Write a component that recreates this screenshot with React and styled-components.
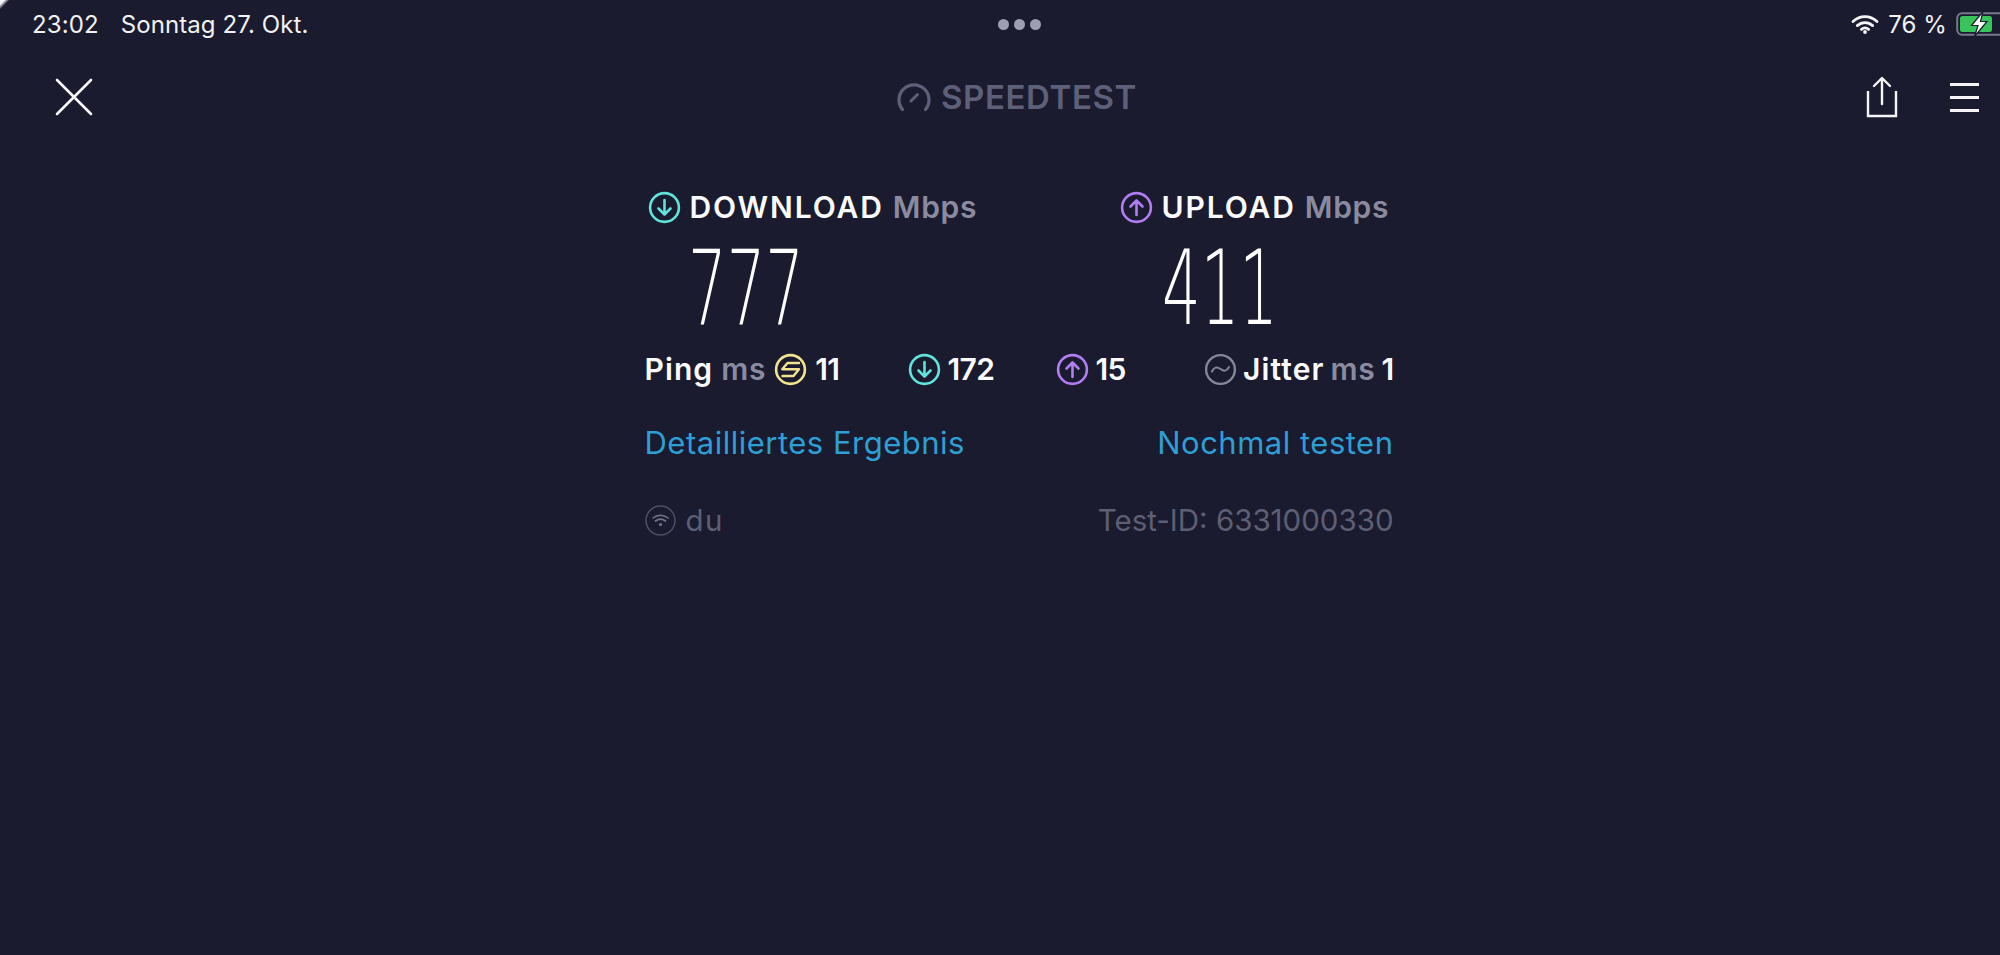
import React from 'react';
import styled, { createGlobalStyle } from 'styled-components';

const GlobalStyle = createGlobalStyle`
  html, body {
    margin: 0;
    height: 100%;
    background: #1a1b2e;
  }
  #root {
    height: 100%;
  }
`;

const CircleArrow = ({ color, up, size = 33 }) => (
  <svg width={size} height={size} viewBox="0 0 33 33" fill="none" style={{ flexShrink: 0 }}>
    <circle cx="16.5" cy="16.5" r="14.4" stroke={color} strokeWidth="2.6" />
    {up ? (
      <path d="M16.5 24V9.5M10.5 15.5l6-6 6 6" stroke={color} strokeWidth="2.6" strokeLinecap="round" strokeLinejoin="round" />
    ) : (
      <path d="M16.5 9v14.5M10.5 17.5l6 6 6-6" stroke={color} strokeWidth="2.6" strokeLinecap="round" strokeLinejoin="round" />
    )}
  </svg>
);

const PingIcon = () => (
  <svg width="33" height="33" viewBox="0 0 33 33" fill="none" style={{ flexShrink: 0 }}>
    <circle cx="16.5" cy="16.5" r="14.4" stroke="#f2e48e" strokeWidth="2.6" />
    <path d="M25 10H13.500L8.200 16.200H25L19.500 23H8.500" stroke="#f2e48e" strokeWidth="2.400" strokeLinejoin="round" strokeLinecap="round" />
  </svg>
);

const JitterIcon = () => (
  <svg width="33" height="33" viewBox="0 0 33 33" fill="none" style={{ flexShrink: 0 }}>
    <circle cx="16.5" cy="16.5" r="14.4" stroke="#85869a" strokeWidth="2.4" />
    <path d="M8 18.500c2-4.500 5-5 8.500-2.500s6 2.500 8.500-2" stroke="#85869a" strokeWidth="2" strokeLinecap="round" />
  </svg>
);

const WifiBadge = () => (
  <svg width="31" height="31" viewBox="0 0 31 31" fill="none" style={{ flexShrink: 0 }}>
    <circle cx="15.500" cy="15.500" r="14.500" stroke="#4e5065" strokeWidth="1.500" />
    <path d="M8 13c4.500-3.600 10.500-3.600 15 0M10.500 16c3-2.300 7-2.300 10 0" stroke="#74758a" strokeWidth="1.600" strokeLinecap="round" />
    <circle cx="15.500" cy="19.500" r="1.600" fill="#74758a" />
  </svg>
);

const StatusWifi = () => (
  <svg width="28" height="20" viewBox="0 0 28 20" fill="none">
    <path d="M2 7.500c7-6.500 17-6.500 24 0M6.300 11.600c4.500-4.100 10.900-4.100 15.400 0M10.400 15.400c2.100-1.800 5.100-1.800 7.200 0" stroke="#f4f4f6" strokeWidth="2.800" strokeLinecap="round" />
    <circle cx="14" cy="18" r="1.900" fill="#f4f4f6" />
  </svg>
);

const Battery = () => (
  <BatteryShell>
    <svg width="44" height="26" viewBox="0 0 44 26" fill="none">
      <rect x="1.200" y="2.200" width="50" height="21.600" rx="5" stroke="#77798a" strokeWidth="2" />
      <rect x="4" y="5" width="32" height="16" rx="2.500" fill="#38c45a" />
      <path d="M27 0.500L15.500 14.500H22L18.500 25.500L31 10.500H24.500Z" fill="#fafafa" stroke="#1a1b2e" strokeWidth="1.200" />
    </svg>
  </BatteryShell>
);

const CloseIcon = () => (
  <svg width="38" height="38" viewBox="0 0 38 38" fill="none">
    <path d="M2 2l34 34M36 2L2 36" stroke="#f7f7f9" strokeWidth="2.600" strokeLinecap="round" />
  </svg>
);

const ShareIcon = () => (
  <svg width="32" height="42" viewBox="0 0 32 42" fill="none">
    <path d="M16 28V2.500M8 10l8-8 8 8" stroke="#f5f5f7" strokeWidth="2.400" strokeLinecap="round" strokeLinejoin="round" />
    <path d="M2 15v25h28V15" stroke="#f5f5f7" strokeWidth="2.400" />
  </svg>
);

const GaugeLogo = () => (
  <svg width="34" height="30" viewBox="0 0 34 30" fill="none">
    <path d="M5.500 27.500A15 15 0 1 1 28.500 27.500" stroke="#5e6079" strokeWidth="3.200" strokeLinecap="round" />
    <path d="M14 19l6.500-6.500" stroke="#5e6079" strokeWidth="3" strokeLinecap="round" />
  </svg>
);

const Page = styled.div`
  position: relative;
  height: 955px;
  overflow: hidden;
  background: #1a1b2e;
  font-family: Inter, "Liberation Sans", sans-serif;
`;

// bit of the screen's rounded corner that shows at the top left
const CornerSpeck = styled.div`
  position: absolute;
  top: 0;
  left: 0;
  width: 9px;
  height: 9px;
  background: linear-gradient(135deg, #f4f4f6 0%, #f4f4f6 25%, transparent 55%);
`;

const StatusBar = styled.div`
  height: 48px;
  padding-left: 32px;
  display: grid;
  grid-template-columns: 966px auto 1fr;
  align-items: center;
  color: #f2f2f5;
  font-size: 24px;
  font-weight: 400;
  letter-spacing: 0.1px;
`;

const StatusLeft = styled.div`
  display: flex;
  gap: 22px;
`;

const PagerDots = styled.div`
  display: flex;
  gap: 5px;
`;

const Dot = styled.span`
  width: 11px;
  height: 11px;
  border-radius: 50%;
  background: #9d9eb4;
`;

const StatusRight = styled.div`
  display: flex;
  justify-content: flex-end;
  align-items: center;
  gap: 9px;
`;

const BatteryShell = styled.div`
  width: 44px;
  height: 26px;
  overflow: hidden;
`;

const NavBar = styled.div`
  height: 98px;
  padding: 0 21px 0 55px;
  display: grid;
  grid-template-columns: 842px auto 1fr;
  align-items: center;
`;

const Logo = styled.div`
  display: flex;
  align-items: center;
  gap: 10px;
  color: #5e6079;
  font-size: 33px;
  font-weight: 600;
  letter-spacing: 0.6px;
`;

const NavActions = styled.div`
  display: flex;
  justify-content: flex-end;
  align-items: center;
  gap: 52px;
`;

const Burger = styled.div`
  width: 29px;
  display: flex;
  flex-direction: column;
  gap: 10px;
`;

const BurgerLine = styled.span`
  height: 3px;
  background: #f5f5f7;
`;

const Results = styled.div`
  width: 749px;
  margin: 0 auto;
  padding: 43px 0 0;
  transform: translateX(19px);
`;

const Columns = styled.div`
  display: grid;
  grid-template-columns: 472px 1fr;
  padding-left: 3px;
`;

const Heading = styled.div`
  display: flex;
  align-items: center;
  gap: 9px;
  font-size: 30px;
  font-weight: 600;
  letter-spacing: 1.900px;
  color: #fbfbfd;
`;

const Unit = styled.span`
  color: #8a8ba0;
  letter-spacing: 0.7px;
  font-weight: 600;
`;

const BigValue = styled.div`
  margin: 15px 0 0 ${(p) => p.$left}px;
  height: 96px;
  line-height: 96px;
  font-family: "DejaVu Sans", Inter, sans-serif;
  font-size: 103px;
  font-weight: 200;
  color: #ffffff;
  transform: scaleX(${(p) => p.$squeeze});
  transform-origin: left center;
  white-space: nowrap;
`;

const StatRow = styled.div`
  display: grid;
  grid-template-columns: 263px 148px 147px 1fr;
  margin-top: 15px;
  font-size: 30px;
  font-weight: 600;
  letter-spacing: 1.100px;
  color: #fbfbfd;
`;

const Stat = styled.div`
  display: flex;
  align-items: center;
  gap: ${(p) => p.$gap || 7}px;
  justify-content: ${(p) => (p.$end ? 'flex-end' : 'flex-start')};
`;

const StatNumber = styled.span`
  letter-spacing: -0.6px;
`;

const LinkRow = styled.div`
  display: flex;
  justify-content: space-between;
  margin-top: 37px;
  font-size: 31px;
  font-weight: 400;
  letter-spacing: 0.5px;
  color: #2e9fd6;
`;

const FootRow = styled.div`
  display: flex;
  justify-content: space-between;
  align-items: center;
  margin-top: 41px;
  font-size: 29.500px;
  color: #5d5f74;
`;

const Provider = styled.div`
  display: flex;
  align-items: center;
  gap: 10px;
  letter-spacing: 1.500px;
`;

export default function App() {
  return (
    <Page>
      <GlobalStyle />
      <CornerSpeck />
      <StatusBar>
        <StatusLeft>
          <span>23:02</span>
          <span>Sonntag 27. Okt.</span>
        </StatusLeft>
        <PagerDots>
          <Dot />
          <Dot />
          <Dot />
        </PagerDots>
        <StatusRight>
          <StatusWifi />
          <span>76 %</span>
          <Battery />
        </StatusRight>
      </StatusBar>

      <NavBar>
        <CloseIcon />
        <Logo>
          <GaugeLogo />
          SPEEDTEST
        </Logo>
        <NavActions>
          <ShareIcon />
          <Burger>
            <BurgerLine />
            <BurgerLine />
            <BurgerLine />
          </Burger>
        </NavActions>
      </NavBar>

      <Results>
        <Columns>
          <div>
            <Heading>
              <CircleArrow color="#5fe3da" />
              DOWNLOAD <Unit>Mbps</Unit>
            </Heading>
            <BigValue $left={40} $squeeze={0.59}>777</BigValue>
          </div>
          <div>
            <Heading>
              <CircleArrow color="#b27cf3" up />
              UPLOAD <Unit>Mbps</Unit>
            </Heading>
            <BigValue $left={42} $squeeze={0.59}>411</BigValue>
          </div>
        </Columns>

        <StatRow>
          <Stat $gap={8}>
            Ping <Unit>ms</Unit>
            <PingIcon />
            <StatNumber>11</StatNumber>
          </Stat>
          <Stat>
            <CircleArrow color="#5fe3da" />
            <StatNumber>172</StatNumber>
          </Stat>
          <Stat>
            <CircleArrow color="#b27cf3" up />
            <StatNumber>15</StatNumber>
          </Stat>
          <Stat $end $gap={6}>
            <JitterIcon />
            Jitter <Unit>ms</Unit> <StatNumber>1</StatNumber>
          </Stat>
        </StatRow>

        <LinkRow>
          <span>Detailliertes Ergebnis</span>
          <span>Nochmal testen</span>
        </LinkRow>

        <FootRow>
          <Provider>
            <WifiBadge />
            du
          </Provider>
          <span>Test-ID: 6331000330</span>
        </FootRow>
      </Results>
    </Page>
  );
}
